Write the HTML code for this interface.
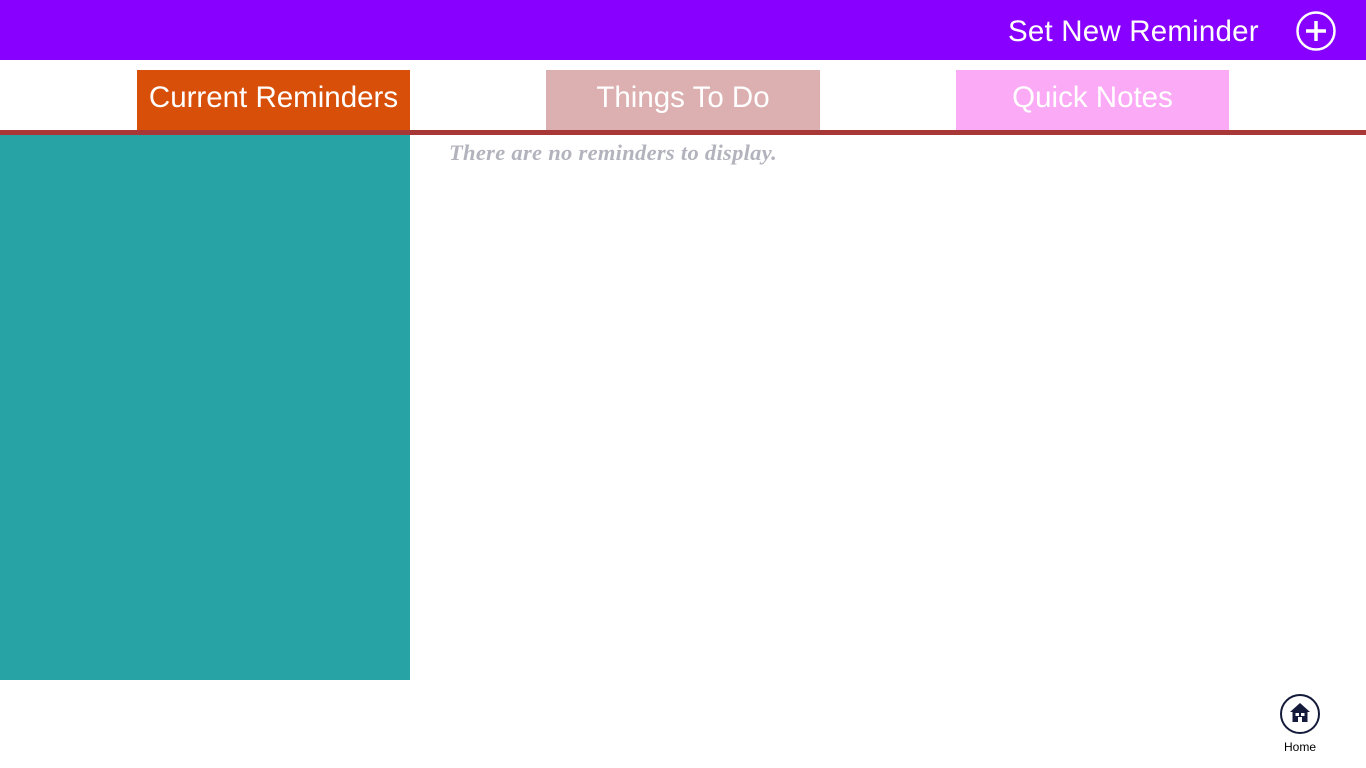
<!DOCTYPE html>
<html><head><meta charset="utf-8"><style>
body{margin:0;width:1366px;height:768px;position:relative;background:#fff;font-family:"Liberation Sans",sans-serif;overflow:hidden}
.hdr{position:absolute;left:0;top:0;width:1366px;height:60px;background:#8800ff}
.t{position:absolute;color:#fff;white-space:nowrap}
.tab{position:absolute;top:70px;height:60px;color:#fff;font-size:29.5px;text-align:center;line-height:56px}
</style></head><body>
<div class="hdr"></div>
<div class="t" style="left:1008px;top:15px;font-size:29.5px;letter-spacing:0.2px">Set New Reminder</div>
<svg style="position:absolute;left:1296px;top:11px" width="40" height="40" viewBox="0 0 40 40"><circle cx="20" cy="20" r="18.5" fill="none" stroke="#fff" stroke-width="2.5"/><path d="M20 10v20M10 20h20" stroke="#fff" stroke-width="3.5"/></svg>
<div class="tab" style="left:137px;width:273px;background:#d84f0a">Current Reminders</div>
<div class="tab" style="left:546px;width:274px;background:#dcb0b0">Things To Do</div>
<div class="tab" style="left:956px;width:273px;background:#fbaaf5">Quick Notes</div>
<div style="position:absolute;left:0;top:130px;width:1366px;height:5px;background:#a83838"></div>
<div style="position:absolute;left:0;top:135px;width:410px;height:545px;background:#27a3a5"></div>
<div style="position:absolute;left:449px;top:140px;font-family:'Liberation Serif',serif;font-style:italic;font-weight:bold;font-size:22.5px;letter-spacing:0.3px;color:#b3b3bd">There are no reminders to display.</div>
<svg style="position:absolute;left:1279px;top:693px" width="42" height="42" viewBox="0 0 42 42"><circle cx="21" cy="21" r="19" fill="none" stroke="#141a3a" stroke-width="2"/><path d="M21 10l-10 9h2.5v10h5.5v-5h4v5h5.5v-10h2.5z" fill="#141a3a"/><rect x="16.5" y="20" width="3.5" height="3" fill="#fff"/><rect x="22" y="20" width="3.5" height="3" fill="#fff"/></svg>
<div style="position:absolute;left:1270px;top:740px;width:60px;text-align:center;font-size:12px;color:#000">Home</div>
</body></html>
